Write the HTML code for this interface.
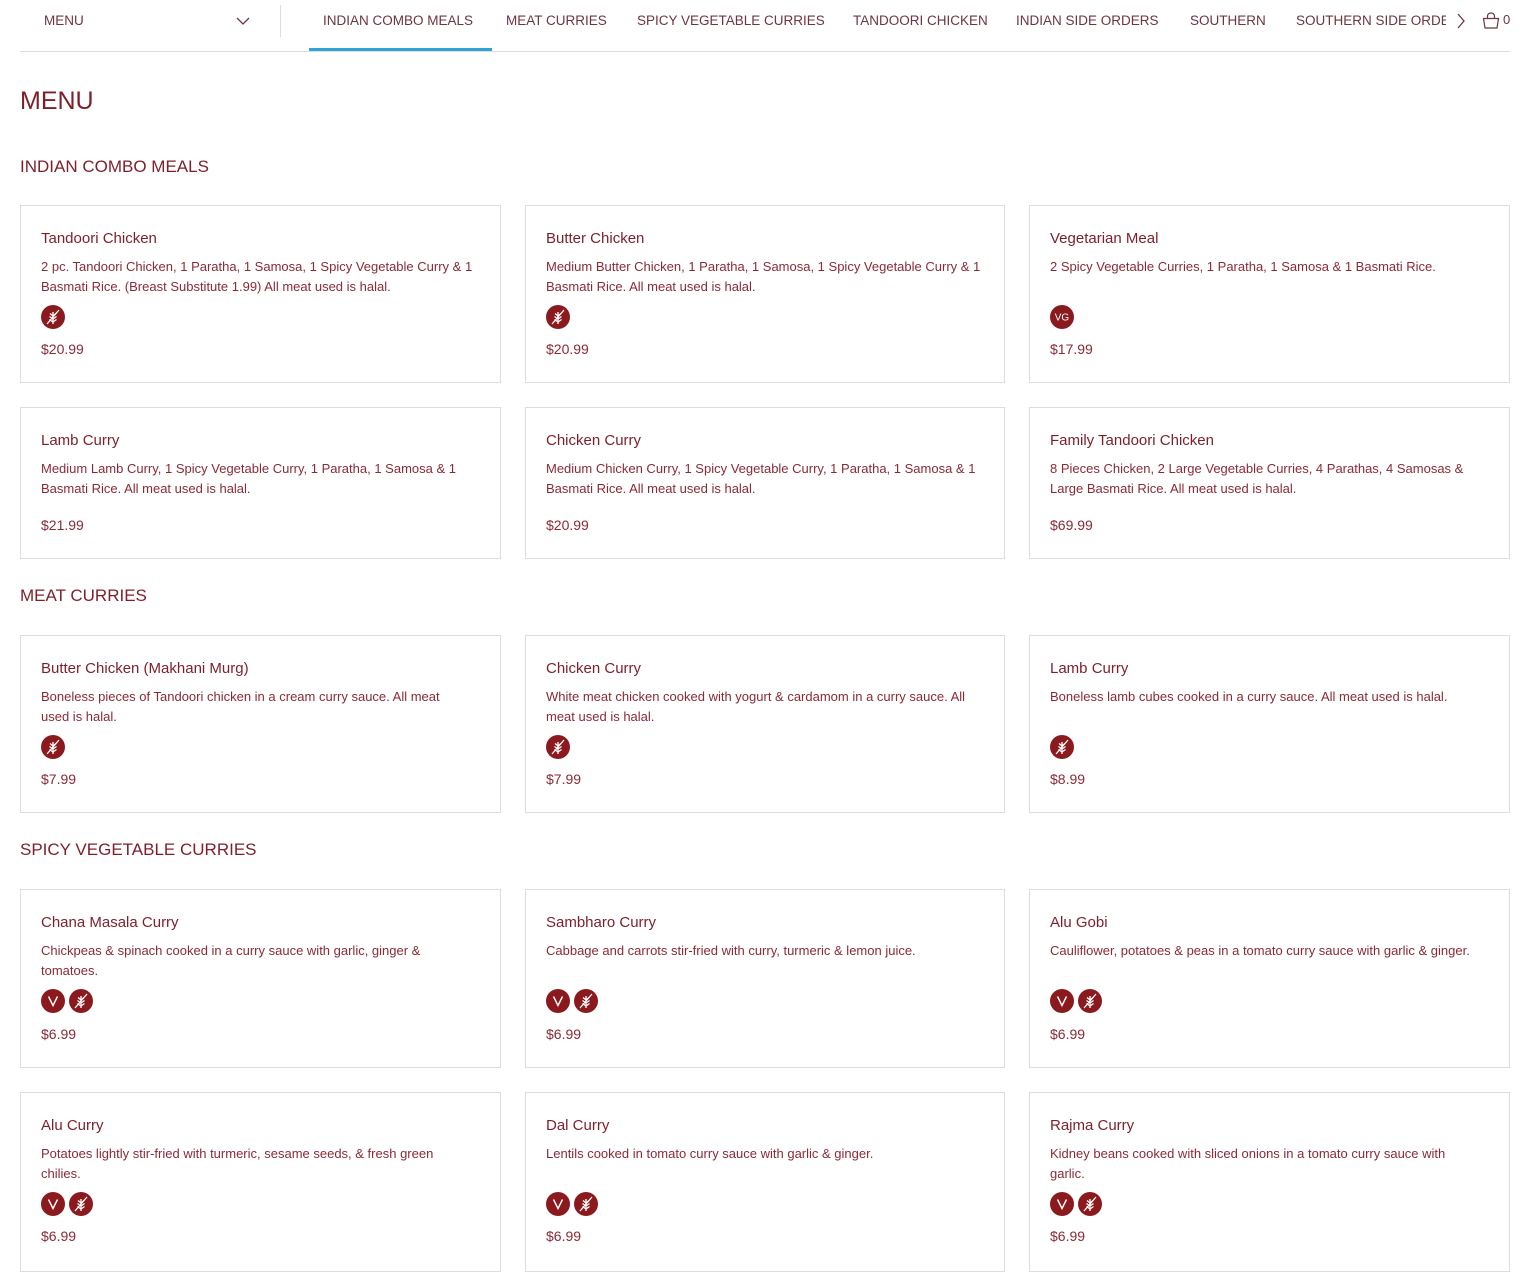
<!DOCTYPE html>
<html><head><meta charset="utf-8"><style>
body{margin:0;width:1530px;height:1254px;overflow:hidden;background:#fff;font-family:"Liberation Sans",sans-serif;color:#7d1f2b;position:relative}
.a{position:absolute;white-space:nowrap}
.nav{font-size:13.5px;color:#6e3440;top:13px}
.card{position:absolute;border:1px solid #ddd;box-sizing:border-box}
.card .t{position:absolute;left:20px;top:24px;font-size:15px;color:#7d1f2b;white-space:nowrap}
.card .d{position:absolute;left:20px;top:51px;font-size:13px;line-height:19.5px;color:#8a2a36;white-space:nowrap}
.card .i{position:absolute;left:20px;top:99px;height:24px;display:flex;gap:4px}
.card .p{position:absolute;left:20px;font-size:14px;color:#8a2a36}
h2{position:absolute;margin:0;font-weight:normal;font-size:17px;left:20px;color:#7d1f2b}
</style></head><body>
<div class="a nav" style="left:44px;">MENU</div>
<svg class="a" style="left:236px;top:16px" width="14" height="10"><path d="M1 2 L7 8 L13 2" stroke="#6e3440" stroke-width="1.3" fill="none"/></svg>
<div class="a" style="left:280px;top:5px;width:1px;height:32px;background:#ddd"></div>
<div class="a nav" style="left:323px">INDIAN COMBO MEALS</div>
<div class="a nav" style="left:506px">MEAT CURRIES</div>
<div class="a nav" style="left:637px">SPICY VEGETABLE CURRIES</div>
<div class="a nav" style="left:853px">TANDOORI CHICKEN</div>
<div class="a nav" style="left:1016px">INDIAN SIDE ORDERS</div>
<div class="a nav" style="left:1190px">SOUTHERN</div>
<div class="a nav" style="left:1296px;width:150px;overflow:hidden">SOUTHERN SIDE ORDERS</div>
<svg class="a" style="left:1456px;top:13px" width="10" height="16"><path d="M2 1 L8 8 L2 15" stroke="#6e3440" stroke-width="1.3" fill="none"/></svg>
<svg class="a" style="left:1482px;top:12px" width="18" height="17"><path d="M1.5 6.5 H16.5 L15 16 H3 Z M5.5 6.5 V4 a3.5 3 0 0 1 7 0 V6.5" stroke="#6e3440" stroke-width="1.2" fill="none"/></svg>
<div class="a" style="left:1503px;top:12px;font-size:13px;color:#6e3440">0</div>
<div class="a" style="left:20px;top:51px;width:1490px;height:1px;background:#ddd"></div>
<div class="a" style="left:309px;top:48px;width:183px;height:3px;background:#2fa3d6"></div>

<div class="a" style="left:20px;top:87px;font-size:25px;color:#7d1f2b">MENU</div>

<svg width="0" height="0" style="position:absolute"><defs>
<symbol id="gf" viewBox="0 0 24 24"><circle cx="12" cy="12" r="12" fill="#8b1a1f"/><g stroke="#fff" stroke-width="1.3" fill="none"><path d="M12 19 V7"/><path d="M12 11 L9 8.5 M12 11 L15 8.5 M12 14 L8.5 11.5 M12 14 L15.5 11.5 M12 17 L8.5 14.5 M12 17 L15.5 14.5"/><path d="M6 19 L18 5"/></g></symbol>
<symbol id="v" viewBox="0 0 24 24"><circle cx="12" cy="12" r="12" fill="#8b1a1f"/><path d="M7.5 7.5 L12 16.5 L16.5 7.5" stroke="#fff" stroke-width="1.4" fill="none"/></symbol>
<symbol id="vg" viewBox="0 0 24 24"><circle cx="12" cy="12" r="12" fill="#8b1a1f"/><text x="12" y="15.5" text-anchor="middle" font-family="Liberation Sans" font-size="10" fill="#fff">VG</text></symbol>
</defs></svg>

<h2 style="top:157px">INDIAN COMBO MEALS</h2>
<div class="card" style="left:20px;top:205px;width:481px;height:178px"><div class="t">Tandoori Chicken</div><div class="d">2 pc. Tandoori Chicken, 1 Paratha, 1 Samosa, 1 Spicy Vegetable Curry &amp; 1<br>Basmati Rice. (Breast Substitute 1.99) All meat used is halal.</div><div class="i"><svg width="24" height="24"><use href="#gf"/></svg></div><div class="p" style="top:135px">$20.99</div></div>
<div class="card" style="left:525px;top:205px;width:480px;height:178px"><div class="t">Butter Chicken</div><div class="d">Medium Butter Chicken, 1 Paratha, 1 Samosa, 1 Spicy Vegetable Curry &amp; 1<br>Basmati Rice. All meat used is halal.</div><div class="i"><svg width="24" height="24"><use href="#gf"/></svg></div><div class="p" style="top:135px">$20.99</div></div>
<div class="card" style="left:1029px;top:205px;width:481px;height:178px"><div class="t">Vegetarian Meal</div><div class="d">2 Spicy Vegetable Curries, 1 Paratha, 1 Samosa &amp; 1 Basmati Rice.</div><div class="i"><svg width="24" height="24"><use href="#vg"/></svg></div><div class="p" style="top:135px">$17.99</div></div>

<div class="card" style="left:20px;top:407px;width:481px;height:152px"><div class="t">Lamb Curry</div><div class="d">Medium Lamb Curry, 1 Spicy Vegetable Curry, 1 Paratha, 1 Samosa &amp; 1<br>Basmati Rice. All meat used is halal.</div><div class="p" style="top:109px">$21.99</div></div>
<div class="card" style="left:525px;top:407px;width:480px;height:152px"><div class="t">Chicken Curry</div><div class="d">Medium Chicken Curry, 1 Spicy Vegetable Curry, 1 Paratha, 1 Samosa &amp; 1<br>Basmati Rice. All meat used is halal.</div><div class="p" style="top:109px">$20.99</div></div>
<div class="card" style="left:1029px;top:407px;width:481px;height:152px"><div class="t">Family Tandoori Chicken</div><div class="d">8 Pieces Chicken, 2 Large Vegetable Curries, 4 Parathas, 4 Samosas &amp;<br>Large Basmati Rice. All meat used is halal.</div><div class="p" style="top:109px">$69.99</div></div>

<h2 style="top:586px">MEAT CURRIES</h2>
<div class="card" style="left:20px;top:635px;width:481px;height:178px"><div class="t">Butter Chicken (Makhani Murg)</div><div class="d">Boneless pieces of Tandoori chicken in a cream curry sauce. All meat<br>used is halal.</div><div class="i"><svg width="24" height="24"><use href="#gf"/></svg></div><div class="p" style="top:135px">$7.99</div></div>
<div class="card" style="left:525px;top:635px;width:480px;height:178px"><div class="t">Chicken Curry</div><div class="d">White meat chicken cooked with yogurt &amp; cardamom in a curry sauce. All<br>meat used is halal.</div><div class="i"><svg width="24" height="24"><use href="#gf"/></svg></div><div class="p" style="top:135px">$7.99</div></div>
<div class="card" style="left:1029px;top:635px;width:481px;height:178px"><div class="t">Lamb Curry</div><div class="d">Boneless lamb cubes cooked in a curry sauce. All meat used is halal.</div><div class="i"><svg width="24" height="24"><use href="#gf"/></svg></div><div class="p" style="top:135px">$8.99</div></div>

<h2 style="top:840px">SPICY VEGETABLE CURRIES</h2>
<div class="card" style="left:20px;top:889px;width:481px;height:179px"><div class="t">Chana Masala Curry</div><div class="d">Chickpeas &amp; spinach cooked in a curry sauce with garlic, ginger &amp;<br>tomatoes.</div><div class="i"><svg width="24" height="24"><use href="#v"/></svg><svg width="24" height="24"><use href="#gf"/></svg></div><div class="p" style="top:136px">$6.99</div></div>
<div class="card" style="left:525px;top:889px;width:480px;height:179px"><div class="t">Sambharo Curry</div><div class="d">Cabbage and carrots stir-fried with curry, turmeric &amp; lemon juice.</div><div class="i"><svg width="24" height="24"><use href="#v"/></svg><svg width="24" height="24"><use href="#gf"/></svg></div><div class="p" style="top:136px">$6.99</div></div>
<div class="card" style="left:1029px;top:889px;width:481px;height:179px"><div class="t">Alu Gobi</div><div class="d">Cauliflower, potatoes &amp; peas in a tomato curry sauce with garlic &amp; ginger.</div><div class="i"><svg width="24" height="24"><use href="#v"/></svg><svg width="24" height="24"><use href="#gf"/></svg></div><div class="p" style="top:136px">$6.99</div></div>

<div class="card" style="left:20px;top:1092px;width:481px;height:180px"><div class="t">Alu Curry</div><div class="d">Potatoes lightly stir-fried with turmeric, sesame seeds, &amp; fresh green<br>chilies.</div><div class="i"><svg width="24" height="24"><use href="#v"/></svg><svg width="24" height="24"><use href="#gf"/></svg></div><div class="p" style="top:135px">$6.99</div></div>
<div class="card" style="left:525px;top:1092px;width:480px;height:180px"><div class="t">Dal Curry</div><div class="d">Lentils cooked in tomato curry sauce with garlic &amp; ginger.</div><div class="i"><svg width="24" height="24"><use href="#v"/></svg><svg width="24" height="24"><use href="#gf"/></svg></div><div class="p" style="top:135px">$6.99</div></div>
<div class="card" style="left:1029px;top:1092px;width:481px;height:180px"><div class="t">Rajma Curry</div><div class="d">Kidney beans cooked with sliced onions in a tomato curry sauce with<br>garlic.</div><div class="i"><svg width="24" height="24"><use href="#v"/></svg><svg width="24" height="24"><use href="#gf"/></svg></div><div class="p" style="top:135px">$6.99</div></div>
</body></html>
